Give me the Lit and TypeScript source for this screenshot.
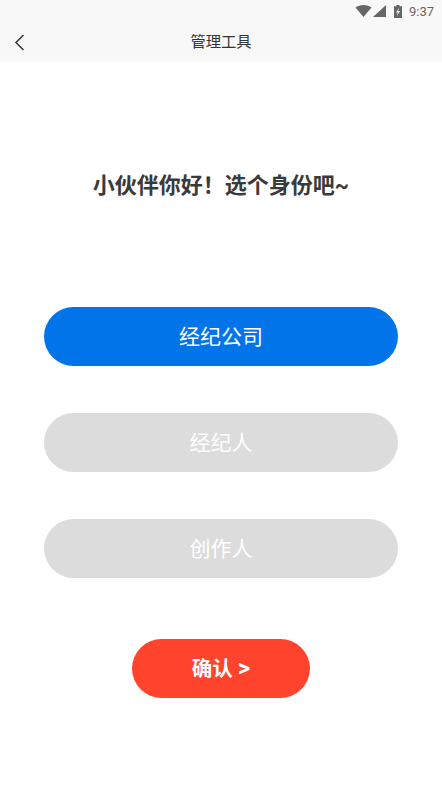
import { LitElement, html, css } from "lit";
import { customElement } from "lit/decorators.js";

@customElement("app-root")
export class AppRoot extends LitElement {
  static styles = css`
    :host {
      display: block;
      width: 442px;
      height: 786px;
      background: #fff;
      overflow: hidden;
      font-family: "Roboto", "Noto Sans CJK SC", sans-serif;
    }
    .status {
      height: 22px;
      background: #f8f8f8;
      display: flex;
      align-items: center;
      justify-content: flex-end;
      padding-right: 8px;
      gap: 7px;
      color: #666;
      font-size: 13px;
    }
    .status svg { display: block; }
    .icons { display: flex; align-items: center; gap: 1px; }
    .battery { margin-left: 7px; }
    .nav {
      height: 40px;
      box-sizing: border-box;
      padding-bottom: 4px;
      background: #f8f8f8;
      display: flex;
      align-items: center;
      justify-content: center;
      position: relative;
      font-size: 15.3px;
      color: #333;
    }
    .back { position: absolute; left: 14px; top: 11px; }
    .main {
      display: flex;
      flex-direction: column;
      align-items: center;
    }
    h1 {
      margin: 107px 0 0;
      font-size: 22px;
      line-height: 34px;
      font-weight: 700;
      color: #3a3a3a;
    }
    .roles {
      margin-top: 104px;
      display: flex;
      flex-direction: column;
      gap: 47px;
    }
    .role {
      box-sizing: border-box;
      width: 354px;
      height: 59px;
      padding-bottom: 4px;
      border-radius: 30px;
      background: #dcdcdc;
      color: #fff;
      display: flex;
      align-items: center;
      justify-content: center;
      font-size: 21px;
    }
    .role.on { background: #0074e8; }
    .ok {
      box-sizing: border-box;
      margin-top: 61px;
      width: 178px;
      height: 59px;
      padding-bottom: 4px;
      border-radius: 30px;
      background: #ff432c;
      color: #fff;
      display: flex;
      align-items: center;
      justify-content: center;
      font-size: 20.5px;
      font-weight: 700;
    }
    .gt { font-size: 24px; line-height: 1; }
  `;

  render() {
    return html`
      <div class="status">
        <div class="icons">
          <svg width="17" height="12" viewBox="0 0 16 12"><path d="M0 2.500C2 .9 5 0 8 0s6 .9 8 2.500L8 12z" fill="#666"/></svg>
          <svg width="13" height="12" viewBox="0 0 13 12"><path d="M13 0v12H0z" fill="#666"/></svg>
          <svg class="battery" width="8" height="13" viewBox="0 0 8 13"><path fill-rule="evenodd" d="M2.500 0h3v1.200H8V13H0V1.200h2.500zM4.800 3 2 7.500h1.700L3 11l3-5H4.200z" fill="#666"/></svg>
        </div>
        <span>9:37</span>
      </div>
      <div class="nav">
        <svg class="back" width="11" height="18" viewBox="0 0 11 18"><path d="M9.500 2 2 9.500 9.500 17" fill="none" stroke="#333" stroke-width="1.500"/></svg>
        <span>管理工具</span>
      </div>
      <div class="main">
        <h1>小伙伴你好！选个身份吧~</h1>
        <div class="roles">
          <div class="role on">经纪公司</div>
          <div class="role">经纪人</div>
          <div class="role">创作人</div>
        </div>
        <div class="ok"><span>确认 <span class="gt">&gt;</span></span></div>
      </div>
    `;
  }
}
